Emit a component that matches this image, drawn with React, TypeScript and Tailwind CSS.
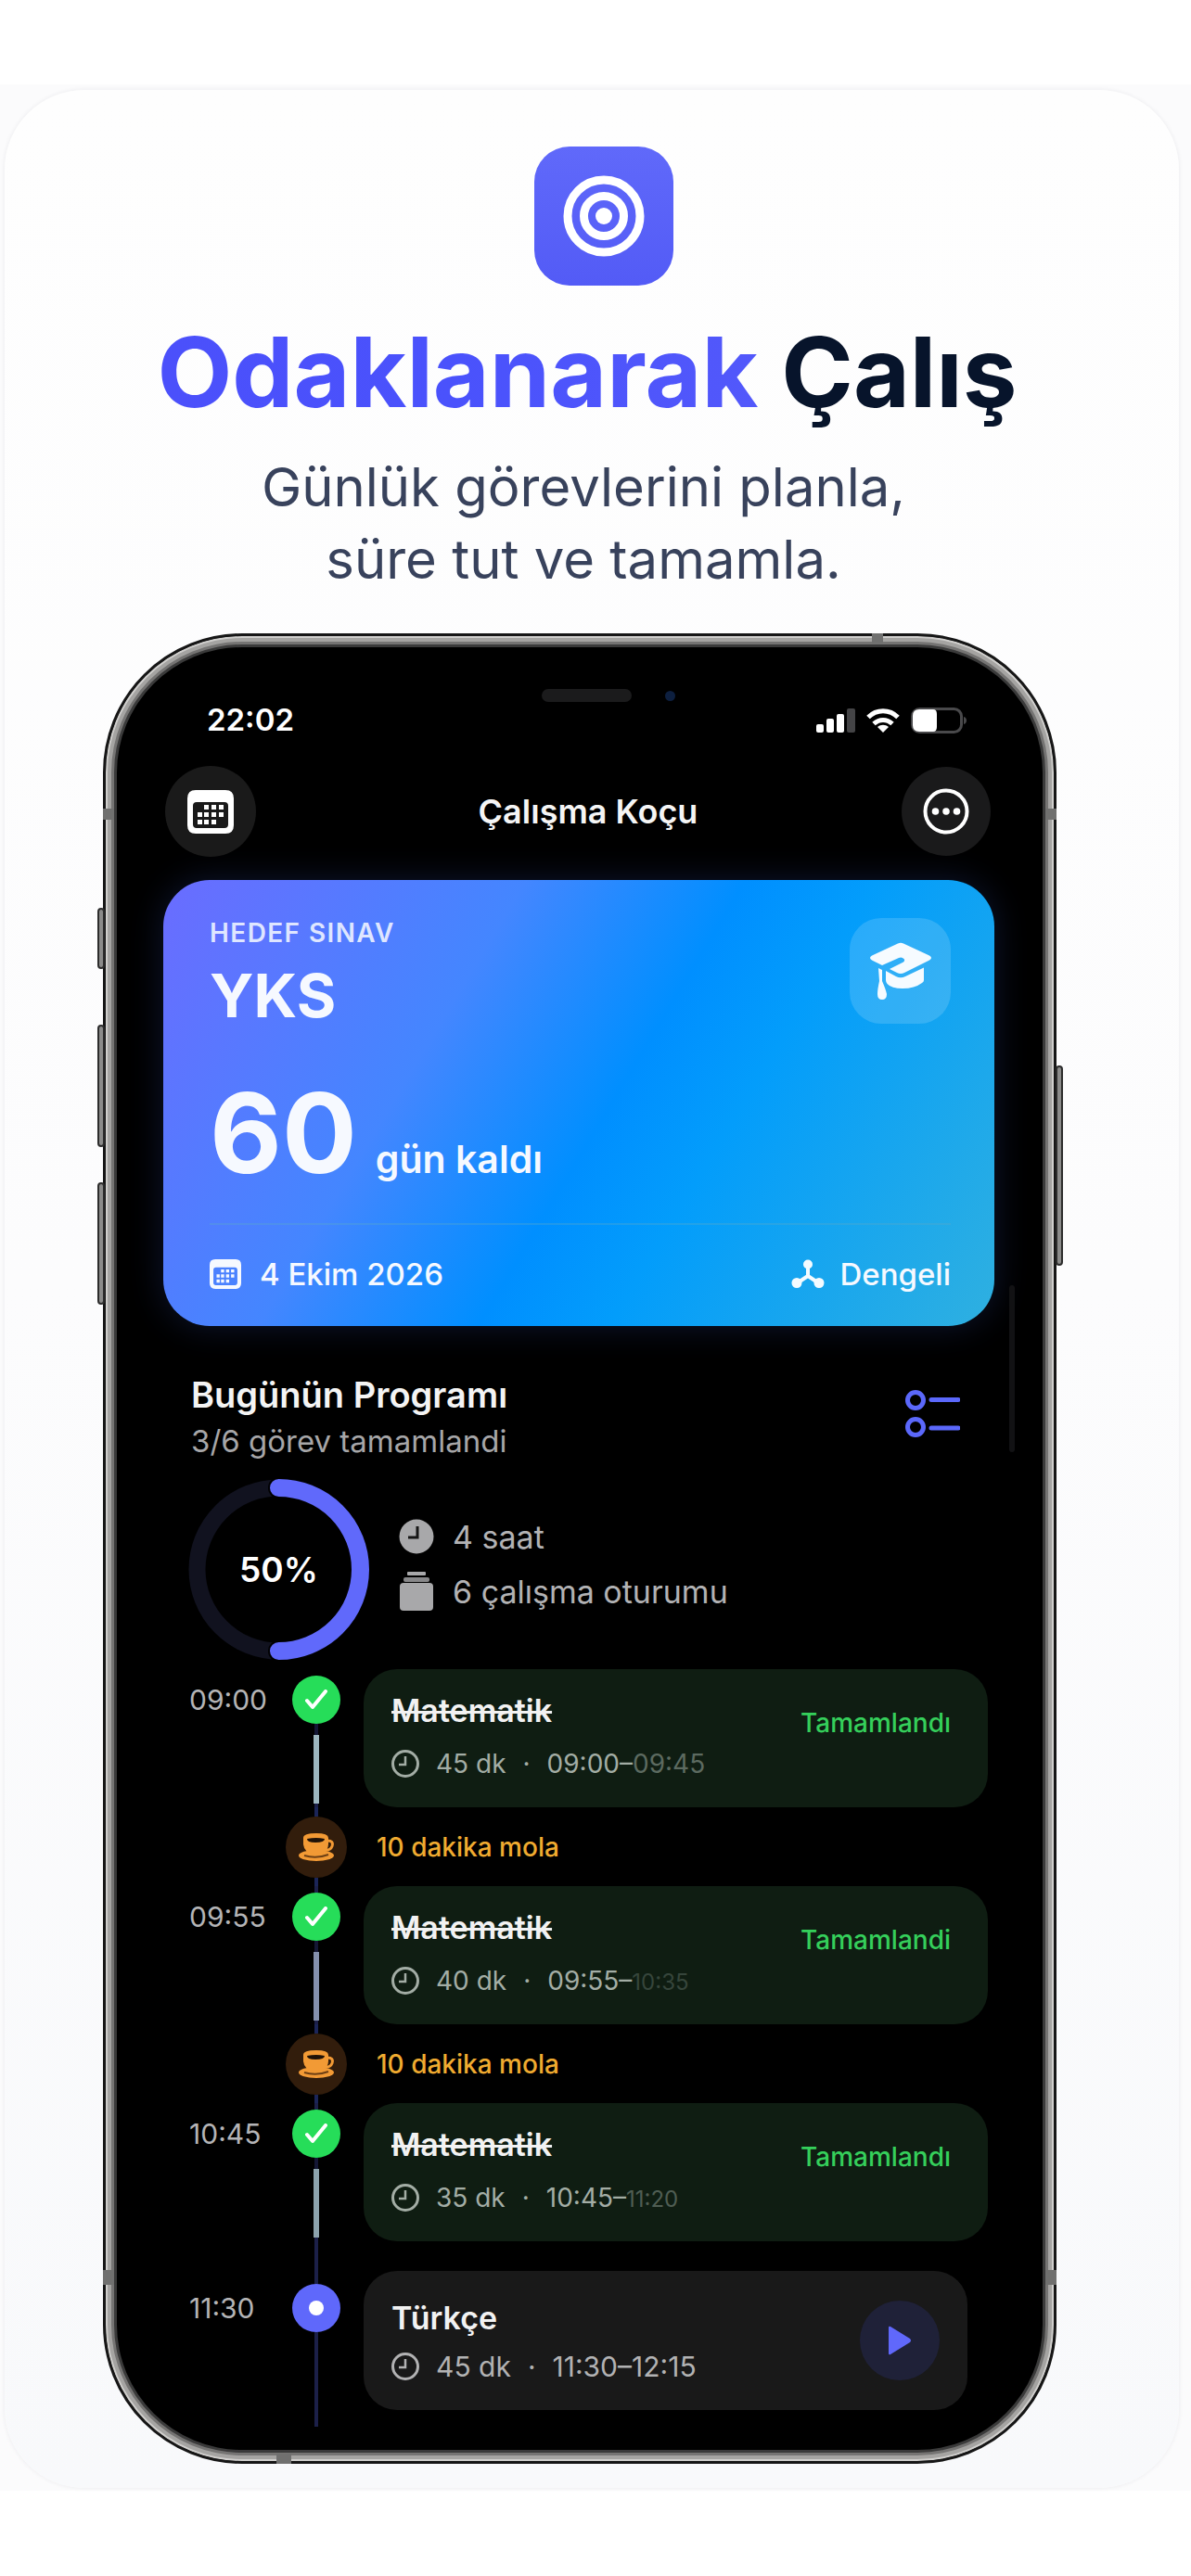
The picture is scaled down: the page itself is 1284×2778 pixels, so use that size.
import React from "react";

type Task = {
  start: string;
  end: string;
  endClass: string;
  title: string;
  minutes: string;
  status?: string;
  lineClass?: string;
  breakAfter?: boolean;
};

const tasks: Task[] = [
  { start: "09:00", end: "09:45", endClass: "text-[#5c6a60]", title: "Matematik", minutes: "45 dk", status: "Tamamlandı", lineClass: "bg-[#9db7c0]", breakAfter: true },
  { start: "09:55", end: "10:35", endClass: "text-2xl text-[#36453b]", title: "Matematik", minutes: "40 dk", status: "Tamamlandi", lineClass: "bg-[#8490ad]", breakAfter: true },
  { start: "10:45", end: "11:20", endClass: "text-2xl text-[#4f5d53]", title: "Matematik", minutes: "35 dk", status: "Tamamlandı", lineClass: "bg-[#8ca3ad]" },
  { start: "11:30", end: "12:15", endClass: "", title: "Türkçe", minutes: "45 dk" },
];

function TargetIcon() {
  return (
    <svg viewBox="0 0 88 88" className="size-[88px]" fill="none" stroke="white" aria-hidden="true">
      <circle cx="44" cy="44" r="39" strokeWidth="9" />
      <circle cx="44" cy="44" r="21.5" strokeWidth="9" />
      <circle cx="44" cy="44" r="9" fill="white" stroke="none" />
    </svg>
  );
}

function StatusIcons() {
  return (
    <div className="flex items-center gap-3">
      <svg viewBox="0 0 42 28" className="h-7 w-[42px]" aria-hidden="true">
        <rect x="0" y="18" width="8" height="9" rx="2" fill="#fff" />
        <rect x="11" y="12" width="8" height="15" rx="2" fill="#fff" />
        <rect x="22" y="7" width="8" height="20" rx="2" fill="#fff" />
        <rect x="33" y="1" width="9" height="26" rx="2" fill="#444446" />
      </svg>
      <svg viewBox="0 0 36 28" className="h-7 w-9" fill="none" stroke="#fff" strokeWidth="5" aria-hidden="true">
        <path d="M2 10.5C11 1.500 25 1.500 34 10.500" />
        <path d="M8 17.500C14 12 22 12 28 17.500" />
        <path d="M18 27l-6-6c3.500-3 8.500-3 12 0z" fill="#fff" stroke="none" />
      </svg>
      <svg viewBox="0 0 62 30" className="h-[30px] w-[62px]" aria-hidden="true">
        <rect x="1.500" y="2.500" width="53" height="25" rx="8" fill="none" stroke="#49494b" strokeWidth="3" />
        <path d="M57 11c4 1 4 7 0 8z" fill="#49494b" />
        <path d="M9 3H24Q28 3 28 8V22Q28 27 24 27H9Q2 27 2 20V10Q2 3 9 3Z" fill="#fff" />
      </svg>
    </div>
  );
}

function CalendarIcon({ className }: { className: string }) {
  return (
    <svg viewBox="0 0 50 47" className={className} fill="currentColor" aria-hidden="true">
      <path fillRule="evenodd" d="M9 0H41Q50 0 50 9V38Q50 47 41 47H9Q0 47 0 38V9Q0 0 9 0ZM10 13Q6 13 6 17V37Q6 41 10 41H40Q44 41 44 37V17Q44 13 40 13Z" />
      <path d="M18 16h5v5h-5zM26 16h5v5h-5zM34 16h5v5h-5zM11 24h5v5h-5zM18 24h5v5h-5zM26 24h5v5h-5zM34 24h5v5h-5zM11 32h5v5h-5zM18 32h5v5h-5zM26 32h5v5h-5z" />
    </svg>
  );
}

function CapIcon() {
  return (
    <svg viewBox="0 0 68 62" className="h-[62px] w-[68px]" fill="#f6fbff" aria-hidden="true">
      <path d="M31 1.500Q34 0 37 1.500L65 14.500Q69 17 65 19.500L38 33Q34 35 30 33L22 29L37 21.500Q39 20 37.500 18Q35 15.500 32 17L14 25L3 19.500Q-1 17 3 14.500Z" />
      <path d="M18 31L29 37Q34 39.500 39 37L59 27.500V41Q59 43 57 44Q49 50 36 50Q24 50 19.500 45Q18 43 18 41Z" />
      <path d="M10 28L14 30V42Q18 51 19 56Q19 62 14 62Q9 62 9 56Q9 51 11 42Z" />
    </svg>
  );
}

function BalanceIcon() {
  return (
    <svg viewBox="0 0 36 32" className="h-8 w-9" fill="#f4fbff" stroke="#f4fbff" aria-hidden="true">
      <path d="M18 6V18M18 18L6 26M18 18L30 26" strokeWidth="4" fill="none" />
      <circle cx="18" cy="5.500" r="5" stroke="none" />
      <circle cx="6" cy="25.500" r="5.500" stroke="none" />
      <circle cx="30" cy="25.500" r="5.500" stroke="none" />
    </svg>
  );
}

function CoffeeIcon() {
  return (
    <svg viewBox="0 0 38 30" className="h-[30px] w-[38px]" aria-hidden="true">
      <ellipse cx="19" cy="24" rx="19" ry="6" fill="#f29a35" />
      <path d="M31 8Q38 8 36 14Q34 19 28 18" fill="none" stroke="#f29a35" strokeWidth="3" />
      <path d="M5 5Q5 0 19 0Q32 0 32 5V12Q31 23 18 23Q6 22 5 12Z" fill="#f29a35" />
      <path d="M9 6Q19 4 28 6Q28 10 18 10Q9 10 9 6Z" fill="#1f1208" />
      <path d="M6 24Q19 28 32 23" fill="none" stroke="#6d3f14" strokeWidth="2" />
    </svg>
  );
}

function ClockIcon() {
  return (
    <svg viewBox="0 0 30 30" className="size-[30px]" fill="none" stroke="currentColor" aria-hidden="true">
      <circle cx="15" cy="15" r="13.500" strokeWidth="3" />
      <path d="M15 7V16H8" strokeWidth="2.500" />
    </svg>
  );
}

function TimelineTask({ task }: { task: Task }) {
  const done = Boolean(task.status);
  return (
    <li className="flex">
      <time className={`w-[104px] text-[30px] leading-[52px] text-[#b4b4b6] ${done ? "pt-[7px]" : "pt-[14px]"}`}>{task.start}</time>
      <div className="flex w-[66px] flex-col items-center">
        <div className={`w-1 ${done ? "h-[7px]" : "h-[14px]"} ${task.start === "09:00" ? "" : "bg-[#1c2049]"}`} />
        {done ? (
          <div className="flex size-[52px] items-center justify-center rounded-full bg-[#26dd59]">
            <svg viewBox="0 0 24 22" className="h-[22px] w-6" fill="none" stroke="#fff" strokeWidth="4" strokeLinecap="round" strokeLinejoin="round" aria-hidden="true">
              <path d="M2 12L8 19L22 2" />
            </svg>
          </div>
        ) : (
          <div className="flex size-[52px] items-center justify-center rounded-full bg-[#5f68fb]">
            <div className="size-4 rounded-full bg-white" />
          </div>
        )}
        {done ? (
          <>
            <div className="h-3 w-1 bg-[#141735]" />
            <div className={`h-[74px] w-[6px] ${task.lineClass}`} />
            <div className="w-1 flex-1 bg-[#1c2049]" />
          </>
        ) : (
          <div className="w-1 flex-1 bg-[#1c2049]" />
        )}
      </div>
      <div className={`flex-1 pl-[18px] ${done ? (task.breakAfter ? "" : "pb-8") : "pr-[22px] pb-[18px]"}`}>
        <article className={`flex justify-between rounded-[36px] pl-[30px] ${done ? "bg-[#0f1d12] pr-10" : "bg-[#191919] pr-[30px]"}`}>
          <div className={done ? "pt-[23px] pb-[27px]" : "pt-[29px] pb-[27px]"}>
            <h3 className={`text-[34px] leading-[44px] font-semibold text-[#f2f2f2] ${done ? "line-through decoration-3" : ""}`}>{task.title}</h3>
            <p className={`flex items-center gap-[18px] leading-10 ${done ? "mt-[15px] text-[28px] text-[#a3ada5]" : "mt-[10px] text-[30px] text-[#b2b2b3]"}`}>
              <ClockIcon />
              <span>{task.minutes}</span>
              <span>·</span>
              <span>
                {task.start}–<span className={task.endClass}>{task.end}</span>
              </span>
            </p>
          </div>
          {done ? (
            <span className="pt-[38px] text-[28px] leading-10 font-medium text-[#35cf5b]">{task.status}</span>
          ) : (
            <button type="button" aria-label="Başlat" className="flex size-[86px] items-center justify-center self-center rounded-full bg-[#1f2138]">
              <svg viewBox="0 0 26 32" className="h-8 w-[26px]" aria-hidden="true">
                <path d="M1 2Q1 0 3 1L24 14Q26 16 24 18L3 31Q1 32 1 30Z" fill="#6068fb" />
              </svg>
            </button>
          )}
        </article>
      </div>
    </li>
  );
}

function BreakRow() {
  return (
    <li className="flex h-[85px] items-center pl-[104px]">
      <div className="flex w-[66px] flex-col items-center self-stretch">
        <div className="w-1 flex-1 bg-[#1b2558]" />
        <div className="flex size-[66px] items-center justify-center rounded-full bg-[#321d0c]">
          <CoffeeIcon />
        </div>
        <div className="w-1 flex-1 bg-[#1b2558]" />
      </div>
      <span className="pl-8 text-[28px] font-medium text-[#f0ab30]">10 dakika mola</span>
    </li>
  );
}

function PhoneHardware() {
  const key = "absolute w-[8px] rounded-sm border-2 border-[#2c2c2c] bg-[#8b8b8a]";
  const band = "absolute bg-[#70706f]";
  return (
    <div aria-hidden="true">
      <div className={`${key} top-[293px] -left-[9px] h-[66px]`} />
      <div className={`${key} top-[419px] -left-[9px] h-[132px]`} />
      <div className={`${key} top-[589px] -left-[9px] h-[132px]`} />
      <div className={`${key} top-[463px] -right-[10px] h-[216px]`} />
      <div className={`${band} top-[186px] -left-[3px] h-[12px] w-[12px]`} />
      <div className={`${band} top-[186px] -right-[3px] h-[12px] w-[12px]`} />
      <div className={`${band} bottom-[190px] -left-[3px] h-[16px] w-[12px]`} />
      <div className={`${band} -right-[3px] bottom-[190px] h-[16px] w-[12px]`} />
      <div className={`${band} -top-[3px] right-[184px] h-[11px] w-[12px]`} />
      <div className={`${band} -bottom-[3px] left-[184px] h-[11px] w-[16px]`} />
      <div className="absolute top-[57px] left-[470px] h-[14px] w-[97px] rounded-full bg-[#1b1b1c]" />
      <div className="absolute top-[59px] left-[603px] size-[11px] rounded-full bg-[#0d1f3f]" />
      <div className="absolute top-[700px] right-[42px] h-[180px] w-[6px] rounded-full bg-[#121214]" />
    </div>
  );
}

export default function App() {
  return (
    <main className="min-h-screen bg-white pt-[91px] font-['Inter','Noto_Sans',sans-serif]">
      <div className="bg-[#fbfbfc] pt-[6px] pr-[13px] pb-[3px] pl-[5px]">
        <section className="rounded-[86px] bg-linear-to-b from-[#fefefe] via-[#fcfcfd] to-[#f8f9fb] pt-[61px] pr-[132px] pb-[26px] pl-[106px] shadow-[0_0_5px_rgba(40,40,60,0.08)]">
          <header className="flex flex-col items-center text-center">
            <div className="ml-[52px] flex size-[150px] items-center justify-center rounded-[38px] bg-linear-to-b from-[#6069fa] to-[#535bf6]">
              <TargetIcon />
            </div>
            <h1 className="mt-[33px] ml-4 text-[105px] leading-[120px] font-bold whitespace-nowrap text-[#07142b]">
              <span className="bg-linear-to-r from-[#4b50fb] via-[#4a52fc] to-[#5258fb] bg-clip-text text-transparent">Odaklanarak</span> Çalış
            </h1>
            <p className="mt-[25px] ml-2 text-[58px] leading-[78px] text-[#38425c]">
              Günlük görevlerini planla,
              <br />
              süre tut ve tamamla.
            </p>
          </header>

          <div className="relative mt-[41px] rounded-[150px] border-[3px] border-[#161616] bg-black pt-[71px] pr-[64px] pb-[37px] pl-[62px] shadow-[inset_0_0_0_2px_#d0cfcd,inset_0_0_0_6px_#a5a4a2,inset_0_0_0_9px_#757473,inset_0_0_0_12px_#3a3a3a]">
            <PhoneHardware />
            <div className="flex h-10 items-center justify-between pr-[28px] pl-[47px]">
              <span className="text-[33px] font-semibold text-white">22:02</span>
              <StatusIcons />
            </div>

            <nav className="mt-[29px] flex items-center justify-between pr-1 pl-[2px]">
              <button type="button" aria-label="Takvim" className="flex size-[98px] items-center justify-center rounded-full bg-[#1a1a1a] text-white">
                <CalendarIcon className="h-[47px] w-[50px]" />
              </button>
              <h2 className="pl-5 text-[36px] font-semibold text-[#f5f5f5]">Çalışma Koçu</h2>
              <button type="button" aria-label="Diğer" className="flex size-[96px] items-center justify-center rounded-full bg-[#1a1a1b]">
                <svg viewBox="0 0 50 50" className="size-[50px]" fill="#fff" aria-hidden="true">
                  <circle cx="25" cy="25" r="22.500" fill="none" stroke="#fff" strokeWidth="4" />
                  <circle cx="13.500" cy="25" r="3.800" />
                  <circle cx="25" cy="25" r="3.800" />
                  <circle cx="36.500" cy="25" r="3.800" />
                </svg>
              </button>
            </nav>

            <section className="mt-[25px] rounded-[50px] bg-[linear-gradient(121deg,#6a6cff_0%,#4486ff_33%,#008fff_53%,#039dfb_65%,#2fb0e0_100%)] pt-[41px] pr-[47px] pb-9 pl-[50px] text-[#f6f9ff] shadow-[0_0_36px_rgba(60,90,200,0.24)]">
              <div className="flex h-[120px] justify-between">
                <div>
                  <p className="text-[28px] leading-8 font-semibold tracking-wider text-[#dfe6ff]">HEDEF SINAV</p>
                  <p className="mt-4 text-[65px] leading-[72px] font-bold">YKS</p>
                </div>
                <div className="flex h-[114px] w-[109px] items-center justify-center rounded-[34px] bg-white/15">
                  <CapIcon />
                </div>
              </div>
              <p className="mt-14 flex items-baseline gap-5 leading-[112px]">
                <span className="text-[120px] font-bold">60</span>
                <span className="text-[41px] font-semibold">gün kaldı</span>
              </p>
              <div className="mt-[13px] h-[2px] bg-[#5aa9c8]/35" />
              <div className="mt-[33px] flex justify-between text-[33px] leading-10 font-medium">
                <span className="flex items-center gap-5">
                  <CalendarIcon className="h-8 w-[34px]" />4 Ekim 2026
                </span>
                <span className="flex items-center gap-4">
                  <BalanceIcon />
                  Dengeli
                </span>
              </div>
            </section>

            <div className="mt-[50px] flex items-start justify-between pr-[37px] pl-[30px]">
              <div>
                <h2 className="text-[38px] leading-[48px] font-semibold text-[#f4f4f4]">Bugünün Programı</h2>
                <p className="mt-[6px] text-[33px] leading-10 text-[#a6a6a8]">3/6 görev tamamlandi</p>
              </div>
              <button type="button" aria-label="Görev listesi" className="mt-[18px]">
                <svg viewBox="0 0 60 54" className="h-[54px] w-[60px]" fill="none" stroke="#5b68fb" strokeWidth="5" aria-hidden="true">
                  <circle cx="12" cy="12" r="8.500" />
                  <circle cx="12" cy="41" r="8.500" />
                  <path d="M29 11.500H58M29 42H58" strokeLinecap="round" />
                </svg>
              </button>
            </div>

            <div className="mt-[21px] flex items-center gap-[32px] pl-[27px]">
              <div className="grid size-[195px] place-items-center">
                <svg viewBox="0 0 195 195" className="col-start-1 row-start-1 size-full" fill="none" aria-hidden="true">
                  <circle cx="97.500" cy="97.500" r="88" stroke="#11121f" strokeWidth="18" />
                  <path d="M97.500 9.500A88 88 0 0 1 97.500 185.500" stroke="black" strokeWidth="23" strokeLinecap="round" />
                  <path d="M97.500 9.500A88 88 0 0 1 97.500 185.500" stroke="#6069fb" strokeWidth="19" strokeLinecap="round" />
                </svg>
                <span className="col-start-1 row-start-1 text-[37px] font-semibold text-white">50%</span>
              </div>
              <ul className="pb-3 text-[34px] leading-[59px] text-[#b2b2b4]">
                <li className="flex items-center gap-5">
                  <svg viewBox="0 0 38 38" className="size-[38px]" aria-hidden="true">
                    <circle cx="19" cy="19" r="18.500" fill="#a8a8aa" />
                    <path d="M20 8V20H10" fill="none" stroke="#161616" strokeWidth="3" />
                  </svg>
                  4 saat
                </li>
                <li className="flex items-center gap-5">
                  <svg viewBox="0 0 38 42" className="h-[42px] w-[38px]" fill="#a8a8aa" aria-hidden="true">
                    <rect x="9" y="0" width="20" height="4" rx="1" />
                    <rect x="5" y="6" width="28" height="5" rx="2" fill="#88888a" />
                    <rect x="1" y="12" width="36" height="30" rx="4" />
                  </svg>
                  6 çalışma oturumu
                </li>
              </ul>
            </div>

            <ol className="mt-[10px] pr-[7px] pl-[28px]">
              {tasks.map((task) => (
                <React.Fragment key={task.start}>
                  <TimelineTask task={task} />
                  {task.breakAfter && <BreakRow />}
                </React.Fragment>
              ))}
            </ol>
          </div>
        </section>
      </div>
    </main>
  );
}
